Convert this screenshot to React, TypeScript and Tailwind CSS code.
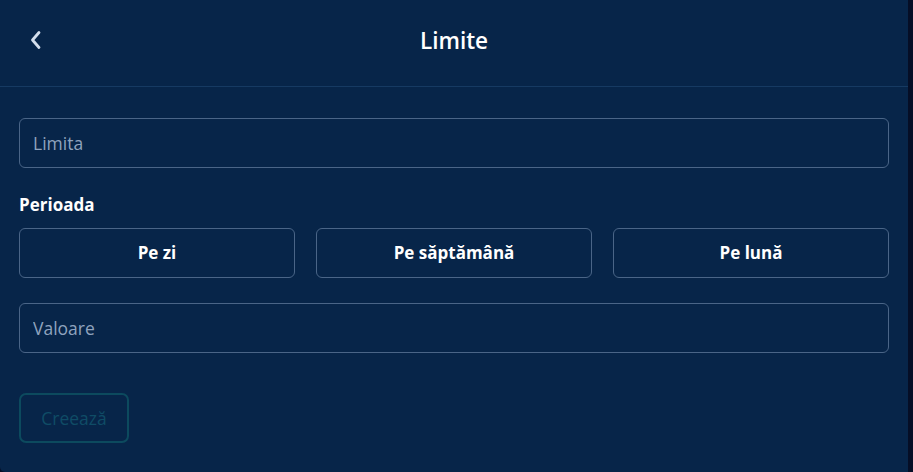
import { useState } from 'react';

const PERIODS = ['Pe zi', 'Pe săptămână', 'Pe lună'];

export default function App() {
  const [limit, setLimit] = useState('');
  const [value, setValue] = useState('');
  const [period, setPeriod] = useState<string | null>(null);

  return (
    <div
      className="w-[913px] h-[472px] bg-[#050e26] overflow-hidden"
      style={{ fontFamily: '"Open Sans", "Noto Sans", sans-serif' }}
    >
      <div className="w-[908px] h-[472px] bg-[#072549] rounded-bl-[5px] text-white">
        {/* Header */}
        <div className="h-[87px] border-b border-[#163a62] flex items-center relative">
          <button className="absolute left-[26px] top-[28px] w-[20px] h-[24px] flex items-center justify-center text-[#d3deec]">
            <svg width="14" height="20" viewBox="0 0 14 20" fill="none">
              <path d="M10 2.5 L3.5 10 L10 17.5" stroke="currentColor" strokeWidth="2.8" strokeLinecap="round" strokeLinejoin="round" />
            </svg>
          </button>
          <h1 className="w-full text-center text-[22.5px] font-semibold -mt-[4px]">Limite</h1>
        </div>

        <div className="px-[19px] pt-[31px]">
          <input
            value={limit}
            onChange={e => setLimit(e.target.value)}
            placeholder="Limita"
            className="w-full h-[50px] rounded-[6px] border border-[#4a6587] bg-transparent px-[13px] text-[17.5px] text-white placeholder-[#8fa3be] outline-none"
          />

          <p className="mt-[25px] mb-[11px] text-[17px] font-bold leading-[24px]">Perioada</p>

          <div className="grid grid-cols-3 gap-[21px]">
            {PERIODS.map(p => (
              <button
                key={p}
                onClick={() => setPeriod(p)}
                className={`h-[50px] rounded-[6px] border text-[17px] font-bold ${period === p ? 'border-[#1fb5c9]' : 'border-[#4a6587]'}`}
              >
                {p}
              </button>
            ))}
          </div>

          <input
            value={value}
            onChange={e => setValue(e.target.value)}
            placeholder="Valoare"
            className="mt-[25px] w-full h-[50px] rounded-[6px] border border-[#4a6587] bg-transparent px-[13px] text-[17.5px] text-white placeholder-[#8fa3be] outline-none"
          />

          <button
            disabled
            className="mt-[40px] w-[110px] h-[50px] rounded-[7px] border-2 border-[#0c4a5e] text-[17.5px] text-[#0f4c66]"
          >
            Creează
          </button>
        </div>
      </div>
    </div>
  );
}
